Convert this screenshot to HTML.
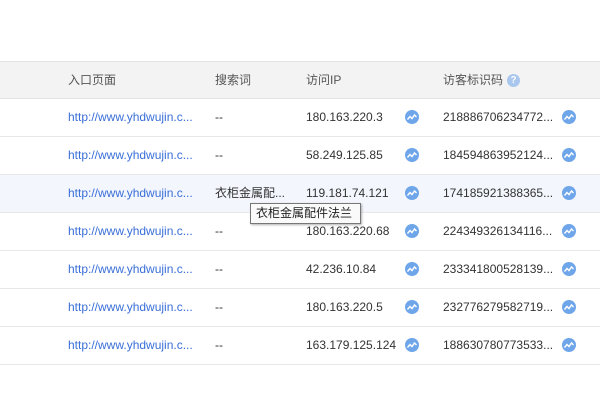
<!DOCTYPE html>
<html><head><meta charset="utf-8"><style>
*{margin:0;padding:0;box-sizing:border-box}
body{width:600px;height:400px;background:#fff;font-family:"Liberation Sans","Noto Sans CJK SC",sans-serif;font-size:12px;color:#333;position:relative;overflow:hidden}
.hdr{position:absolute;left:0;top:61px;width:600px;height:38px;background:#f3f3f3;border-top:1px solid #e2e2e2;border-bottom:1px solid #e2e2e2;color:#555}
.row{position:absolute;left:0;width:600px;height:38px;border-bottom:1px solid #e8e8e8}
.c{position:absolute;top:0;line-height:37px;white-space:nowrap}
.a{color:#3a6fd8}
.ic{position:absolute;width:14px;height:14px;top:11px}
.tip{position:absolute;left:250px;top:203px;width:111px;height:21px;background:#fafafa;border:1px solid #777;box-shadow:1px 1px 2px rgba(0,0,0,.3);font-size:12px;line-height:19px;padding-left:5px;color:#222}
.q{position:absolute;left:507px;top:12px;width:13px;height:13px;border-radius:50%;background:#a8c6ee;color:#fff;font-size:10px;line-height:13px;text-align:center;font-weight:bold}
</style></head><body>
<div class="hdr">
<div class="c" style="left:68px">入口页面</div>
<div class="c" style="left:215px">搜索词</div>
<div class="c" style="left:306px">访问IP</div>
<div class="c" style="left:443px">访客标识码</div>
<div class="q">?</div>
</div>
<svg width="0" height="0" style="position:absolute"><defs><symbol id="i" viewBox="0 0 14 14"><circle cx="7" cy="7" r="7" fill="#6fa6ea"/><path d="M2.5 9.5 L5 6.5 L7 8.5 L9.5 5 L11.5 7" stroke="#fff" stroke-width="1.4" fill="none"/></symbol></defs></svg>
<div class="row" style="top:99px"><div class="c a" style="left:68px">http://www.yhdwujin.c...</div><div class="c" style="left:215px">--</div><div class="c" style="left:306px">180.163.220.3</div><svg class="ic" style="left:405px"><use href="#i"/></svg><div class="c" style="left:443px">218886706234772...</div><svg class="ic" style="left:562px"><use href="#i"/></svg></div>
<div class="row" style="top:137px"><div class="c a" style="left:68px">http://www.yhdwujin.c...</div><div class="c" style="left:215px">--</div><div class="c" style="left:306px">58.249.125.85</div><svg class="ic" style="left:405px"><use href="#i"/></svg><div class="c" style="left:443px">184594863952124...</div><svg class="ic" style="left:562px"><use href="#i"/></svg></div>
<div class="row" style="top:175px;background:#f3f6fc"><div class="c a" style="left:68px">http://www.yhdwujin.c...</div><div class="c" style="left:215px">衣柜金属配...</div><div class="c" style="left:306px">119.181.74.121</div><svg class="ic" style="left:405px"><use href="#i"/></svg><div class="c" style="left:443px">174185921388365...</div><svg class="ic" style="left:562px"><use href="#i"/></svg></div>
<div class="row" style="top:213px"><div class="c a" style="left:68px">http://www.yhdwujin.c...</div><div class="c" style="left:215px">--</div><div class="c" style="left:306px">180.163.220.68</div><svg class="ic" style="left:405px"><use href="#i"/></svg><div class="c" style="left:443px">224349326134116...</div><svg class="ic" style="left:562px"><use href="#i"/></svg></div>
<div class="row" style="top:251px"><div class="c a" style="left:68px">http://www.yhdwujin.c...</div><div class="c" style="left:215px">--</div><div class="c" style="left:306px">42.236.10.84</div><svg class="ic" style="left:405px"><use href="#i"/></svg><div class="c" style="left:443px">233341800528139...</div><svg class="ic" style="left:562px"><use href="#i"/></svg></div>
<div class="row" style="top:289px"><div class="c a" style="left:68px">http://www.yhdwujin.c...</div><div class="c" style="left:215px">--</div><div class="c" style="left:306px">180.163.220.5</div><svg class="ic" style="left:405px"><use href="#i"/></svg><div class="c" style="left:443px">232776279582719...</div><svg class="ic" style="left:562px"><use href="#i"/></svg></div>
<div class="row" style="top:327px"><div class="c a" style="left:68px">http://www.yhdwujin.c...</div><div class="c" style="left:215px">--</div><div class="c" style="left:306px">163.179.125.124</div><svg class="ic" style="left:405px"><use href="#i"/></svg><div class="c" style="left:443px">188630780773533...</div><svg class="ic" style="left:562px"><use href="#i"/></svg></div>
<div class="tip">衣柜金属配件法兰</div>
</body></html>
